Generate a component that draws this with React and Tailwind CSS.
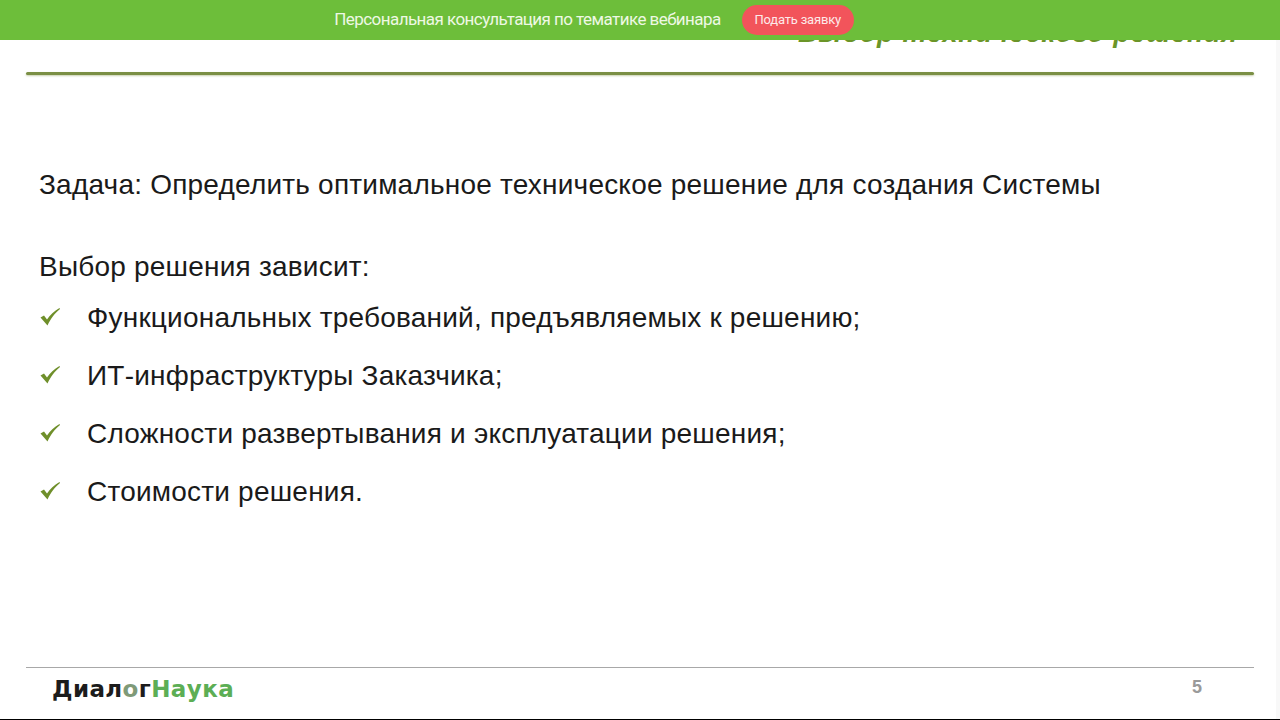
export default function App() {
  const items = [
    "Функциональных требований, предъявляемых к решению;",
    "ИТ-инфраструктуры Заказчика;",
    "Сложности развертывания и эксплуатации решения;",
    "Стоимости решения.",
  ];
  return (
    <div className="relative h-[720px] w-[1280px] overflow-hidden bg-white font-['Liberation_Sans',sans-serif]">
      <div className="absolute inset-x-0 top-0 z-10 flex h-10 items-center justify-center gap-[21px] bg-[#6dbe3a] pr-[92px] font-['Roboto',sans-serif]">
        <span className="text-[17px] tracking-[-0.56px] text-[#eef8e4]">Персональная консультация по тематике вебинара</span>
        <span className="flex h-[30px] w-[112px] items-center justify-center rounded-full bg-[#f2545b] text-[13px] tracking-[-0.2px] text-[#fdeaea]">Подать заявку</span>
      </div>
      <div className="flex h-[719px] flex-col border-r-[4px] border-[#f8f8f8] pl-[26px] pr-[22px]">
        <div className="flex h-[72px] items-start justify-end pr-[16px] pt-[17px]">
          <span className="text-[27px] font-bold italic leading-[32px] tracking-[0.8px] text-[#6b9528]">Выбор технического решения</span>
        </div>
        <div className="h-[3px] rounded-sm bg-[#7b8f45] shadow-[0_1px_2px_rgba(120,140,60,0.4)]" />
        <div className="flex flex-1 flex-col pl-[13px] text-[28px] leading-[32px] tracking-[0.21px] text-[#1a1a1a]">
          <p className="mt-[94px]">Задача: Определить оптимальное техническое решение для создания Системы</p>
          <p className="mt-[50px]">Выбор решения зависит:</p>
          <ul className="mt-[19px] flex flex-col gap-[26px]">
            {items.map((t) => (
              <li key={t} className="flex items-center gap-[26px]">
                <svg width="22" height="20" viewBox="0 0 22 20" className="mt-[-3px] shrink-0" fill="#6f8f2a">
                  <path d="M1.5 10.5 L5 8.5 L8 12.5 C11 8 15 4 20.5 1 L21 2 C15.5 6.5 12 11 8.5 18.5 Z" />
                </svg>
                <span>{t}</span>
              </li>
            ))}
          </ul>
        </div>
        <div className="flex h-[52px] items-start justify-between border-t border-[#a8a8a8] pl-[26px] pr-[52px] pt-[8px]">
          <span className="font-['DejaVu_Sans',sans-serif] text-[23px] font-bold leading-[26px] tracking-[0.4px] text-[#5cae55]">
            <span className="text-[#1c1c1c]">Диал</span>
            <span className="text-[#7f9a78]">о</span>
            <span className="text-[#1c1c1c]">г</span>Наука
          </span>
          <span className="mt-[-1px] text-[18px] font-bold leading-[24px] text-[#9a9a9a]">5</span>
        </div>
      </div>
      <div className="h-[1px] bg-black" />
    </div>
  );
}
